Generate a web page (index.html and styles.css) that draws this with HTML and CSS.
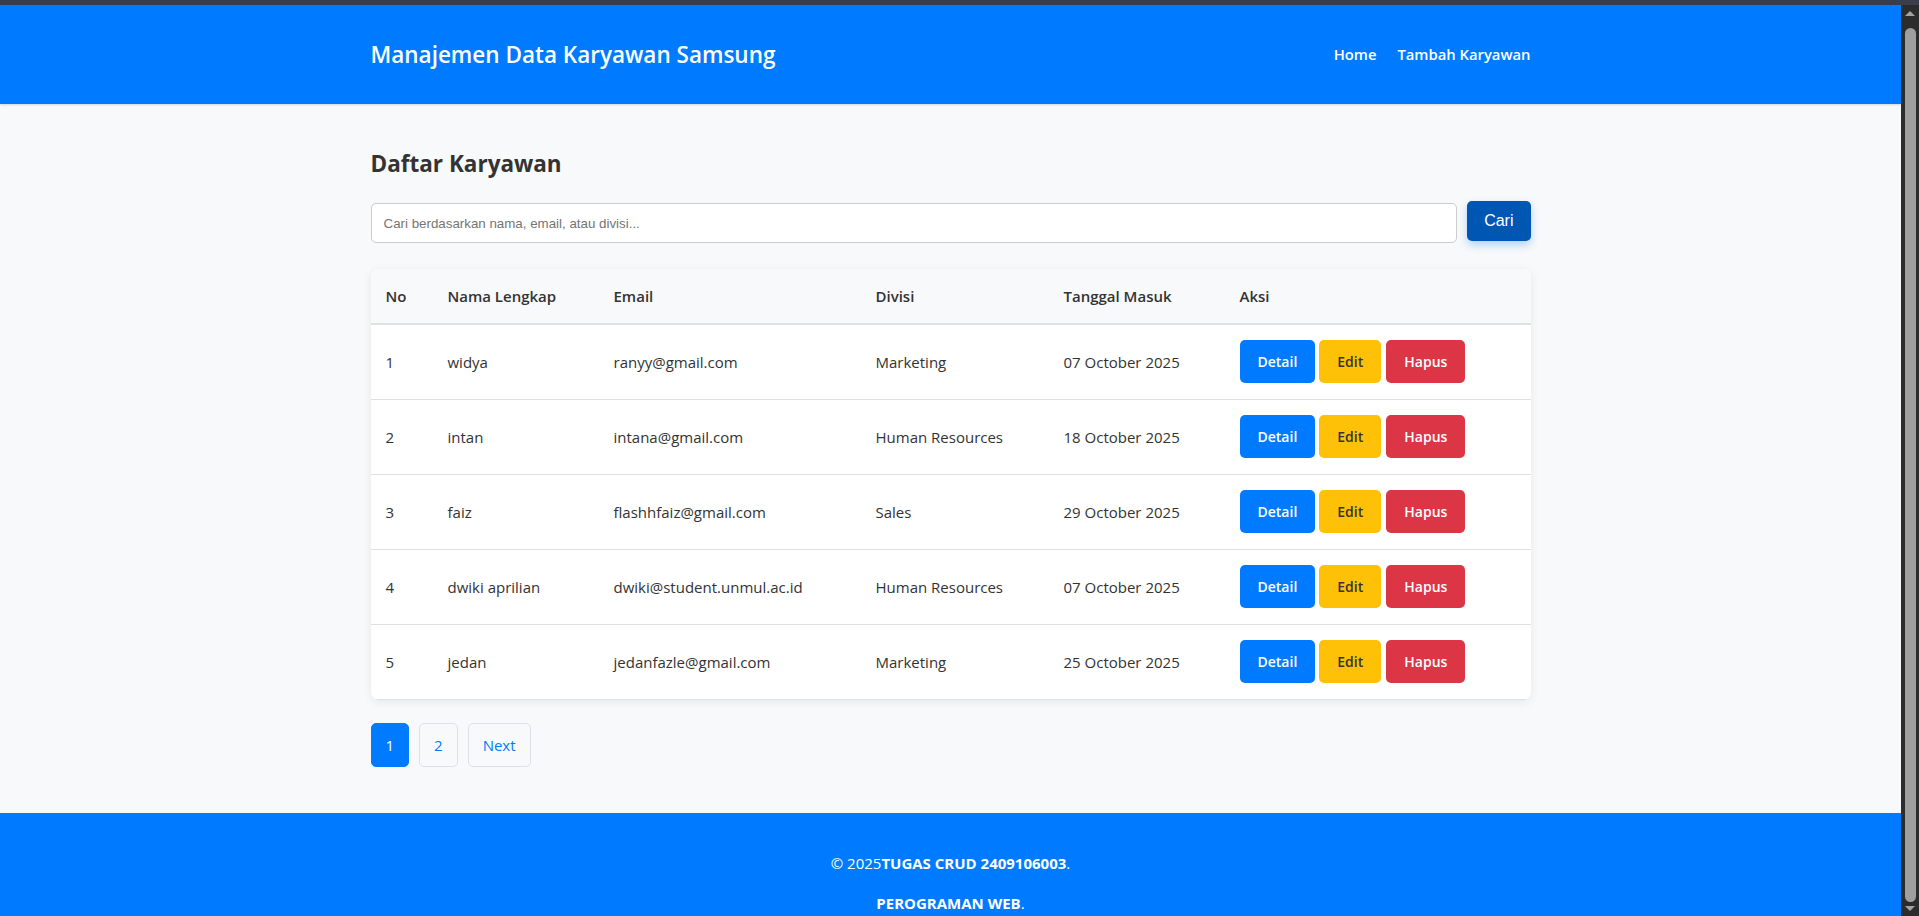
FILE: index.html
```html
<!DOCTYPE html>
<html lang="id">
<head>
<meta charset="utf-8">
<title>Manajemen Data Karyawan Samsung</title>
<link rel="stylesheet" href="styles.css">
</head>
<body>
<div class="window">
  <div class="page">
    <header class="site-header">
      <div class="container header-inner">
        <h1 class="brand">Manajemen Data Karyawan Samsung</h1>
        <nav class="nav">
          <a href="#">Home</a>
          <a href="#">Tambah Karyawan</a>
        </nav>
      </div>
    </header>

    <main class="container main">
      <h2 class="page-title">Daftar Karyawan</h2>

      <form class="search">
        <input class="search-input" type="text" placeholder="Cari berdasarkan nama, email, atau divisi...">
        <button class="search-btn" type="button">Cari</button>
      </form>

      <div class="table-card">
        <table class="data-table">
          <colgroup>
            <col class="c-no"><col class="c-nama"><col class="c-email"><col class="c-divisi"><col class="c-tgl"><col class="c-aksi">
          </colgroup>
          <thead>
            <tr><th>No</th><th>Nama Lengkap</th><th>Email</th><th>Divisi</th><th>Tanggal Masuk</th><th>Aksi</th></tr>
          </thead>
          <tbody>
            <tr><td>1</td><td>widya</td><td>ranyy@gmail.com</td><td>Marketing</td><td>07 October 2025</td>
              <td><div class="actions"><a class="btn btn-detail" href="#">Detail</a><a class="btn btn-edit" href="#">Edit</a><a class="btn btn-hapus" href="#">Hapus</a></div></td></tr>
            <tr><td>2</td><td>intan</td><td>intana@gmail.com</td><td>Human Resources</td><td>18 October 2025</td>
              <td><div class="actions"><a class="btn btn-detail" href="#">Detail</a><a class="btn btn-edit" href="#">Edit</a><a class="btn btn-hapus" href="#">Hapus</a></div></td></tr>
            <tr><td>3</td><td>faiz</td><td>flashhfaiz@gmail.com</td><td>Sales</td><td>29 October 2025</td>
              <td><div class="actions"><a class="btn btn-detail" href="#">Detail</a><a class="btn btn-edit" href="#">Edit</a><a class="btn btn-hapus" href="#">Hapus</a></div></td></tr>
            <tr><td>4</td><td>dwiki aprilian</td><td>dwiki@student.unmul.ac.id</td><td>Human Resources</td><td>07 October 2025</td>
              <td><div class="actions"><a class="btn btn-detail" href="#">Detail</a><a class="btn btn-edit" href="#">Edit</a><a class="btn btn-hapus" href="#">Hapus</a></div></td></tr>
            <tr><td>5</td><td>jedan</td><td>jedanfazle@gmail.com</td><td>Marketing</td><td>25 October 2025</td>
              <td><div class="actions"><a class="btn btn-detail" href="#">Detail</a><a class="btn btn-edit" href="#">Edit</a><a class="btn btn-hapus" href="#">Hapus</a></div></td></tr>
          </tbody>
        </table>
      </div>

      <nav class="pagination">
        <a class="page-link active" href="#">1</a>
        <a class="page-link" href="#">2</a>
        <a class="page-link" href="#">Next</a>
      </nav>
    </main>

    <footer class="site-footer">
      <p>&copy; 2025<strong>TUGAS CRUD 2409106003</strong>.</p>
      <p><strong>PEROGRAMAN WEB</strong>.</p>
    </footer>
  </div>

  <div class="scrollbar">
    <span class="sb-arrow sb-up"></span>
    <div class="sb-track"><div class="sb-thumb"></div></div>
    <span class="sb-arrow sb-down"></span>
  </div>
</div>
</body>
</html>
```

FILE: styles.css
```css
* { box-sizing: border-box; }

html, body {
  margin: 0;
  height: 100%;
}

body {
  border-top: 5px solid #3a3e4a;
  background: #2b2b2b;
  font-family: "Open Sans", "Noto Sans", sans-serif;
  font-size: 15px;
  color: #333333;
  overflow: hidden;
}

.window {
  display: flex;
  height: calc(100vh - 5px);
}

.page {
  flex: 1;
  min-width: 0;
  background: #f8f9fa;
  overflow: hidden;
}

.container {
  max-width: 1200px;
  margin: 0 auto;
  padding: 0 20px;
}

/* Header */
.site-header {
  background: #007bff;
  height: 99px;
  box-shadow: 0 1px 2px rgba(0, 0, 0, 0.15);
}

.header-inner {
  height: 100%;
  display: flex;
  align-items: center;
  justify-content: space-between;
}

.brand {
  margin: 0;
  font-size: 22.5px;
  font-weight: 600;
  color: #ffffff;
  line-height: 30px;
}

.nav {
  display: flex;
  gap: 21px;
  margin-bottom: 2px;
}

.nav a {
  color: #ffffff;
  text-decoration: none;
  font-weight: 600;
  font-size: 14.8px;
}

/* Main */
.main {
  padding-top: 45px;
  padding-bottom: 46px;
}

.page-title {
  margin: 0 0 25px;
  font-size: 22.5px;
  font-weight: 700;
  line-height: 29px;
  color: #333333;
}

.search {
  display: flex;
  gap: 10px;
  margin: 0 0 26px;
}

.search-input {
  flex: 1;
  height: 40px;
  padding: 0 12px;
  border: 1px solid #cccccc;
  border-radius: 5px;
  background: #ffffff;
  font-family: "Liberation Sans", Arial, sans-serif;
  font-size: 13.33px;
  color: #333333;
}

.search-input::placeholder {
  color: #757575;
}

.search-btn {
  height: 40px;
  padding: 0 17px;
  border: none;
  border-radius: 5px;
  background: #0056b3;
  color: #ffffff;
  font-family: "Liberation Sans", Arial, sans-serif;
  font-size: 16px;
  transform: translateY(-2px);
  box-shadow: 0 4px 8px rgba(0, 123, 255, 0.3);
}

/* Table */
.table-card {
  background: #ffffff;
  border-radius: 8px;
  box-shadow: 0 2px 10px rgba(0, 0, 0, 0.08);
  overflow: hidden;
}

.data-table {
  width: 100%;
  border-collapse: collapse;
  table-layout: fixed;
}

.c-no { width: 62px; }
.c-nama { width: 166px; }
.c-email { width: 262px; }
.c-divisi { width: 188px; }
.c-tgl { width: 176px; }

.data-table th {
  background: #f8f9fa;
  text-align: left;
  font-weight: 600;
  padding: 0 15px;
  height: 55px;
  border-bottom: 2px solid #dee2e6;
  color: #333333;
}

.data-table td {
  padding: 0 15px;
  height: 75px;
  border-bottom: 1px solid #e0e0e0;
  white-space: nowrap;
}

.actions {
  display: flex;
  gap: 4px;
}

.btn {
  display: inline-flex;
  align-items: center;
  height: 43px;
  padding: 0 18px;
  border-radius: 5px;
  font-size: 14px;
  font-weight: 600;
  text-decoration: none;
  color: #ffffff;
}

.btn-detail { background: #007bff; }
.btn-edit { background: #ffc107; color: #333333; }
.btn-hapus { background: #dc3545; margin-left: 1px; }

/* Pagination */
.pagination {
  display: flex;
  gap: 10px;
  margin-top: 23px;
}

.page-link {
  display: inline-block;
  height: 44px;
  line-height: 42px;
  padding: 0 14px;
  border: 1px solid #dee2e6;
  border-radius: 5px;
  color: #007bff;
  text-decoration: none;
  font-size: 15px;
}

.page-link.active {
  background: #007bff;
  border-color: #007bff;
  color: #ffffff;
}

/* Footer */
.site-footer {
  background: #007bff;
  color: #ffffff;
  text-align: center;
  padding: 22px 20px 20px;
  font-size: 15px;
  line-height: 24px;
}

.site-footer p {
  margin: 16px 0;
}

/* Fake scrollbar */
.scrollbar {
  width: 18px;
  background: #2c2c2c;
  display: flex;
  flex-direction: column;
  align-items: center;
  padding: 6px 0 5px;
}

.sb-arrow {
  width: 0;
  height: 0;
  border-left: 5px solid transparent;
  border-right: 5px solid transparent;
}

.sb-up { border-bottom: 5px solid #a3a3a3; }
.sb-down { border-top: 5px solid #a3a3a3; }

.sb-track {
  flex: 1;
  width: 100%;
  display: flex;
  justify-content: center;
  padding: 12px 0 4px;
}

.sb-thumb {
  width: 11px;
  background: #9f9f9f;
  border-radius: 6px;
}
```
